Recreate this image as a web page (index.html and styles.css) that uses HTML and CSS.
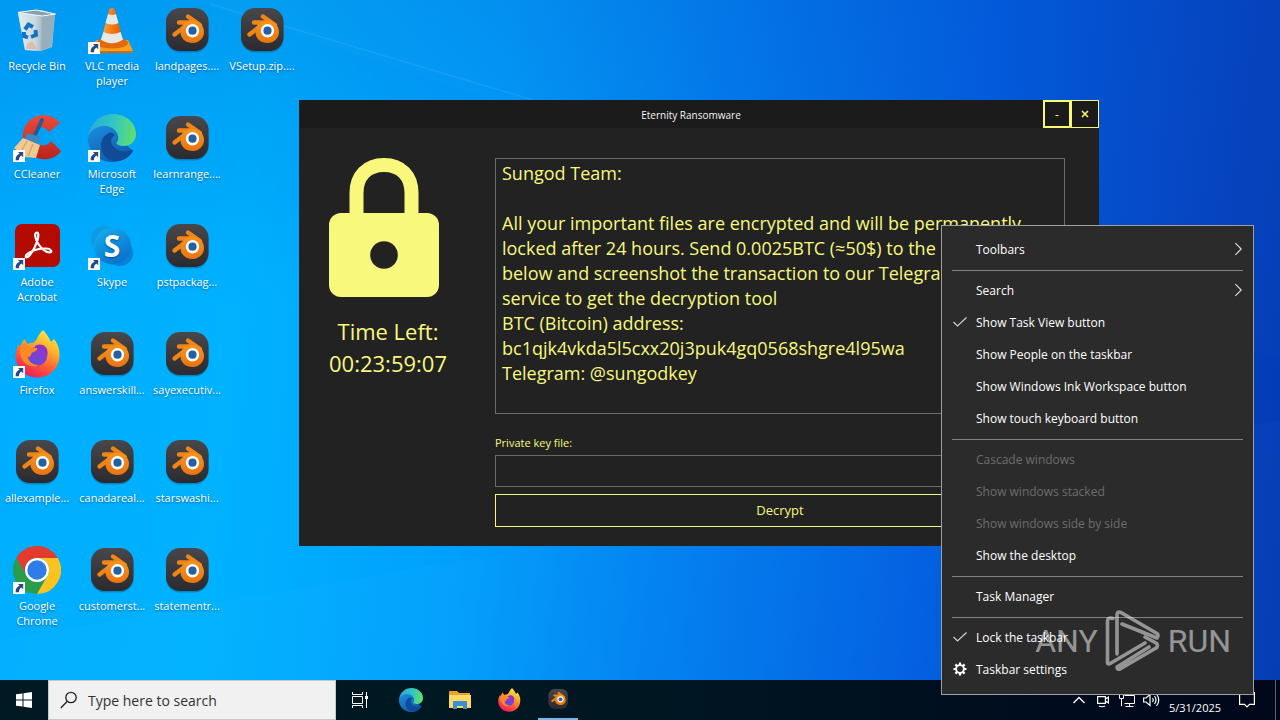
FILE: index.html
```html
<!DOCTYPE html>
<html lang="en">
<head>
<meta charset="utf-8">
<title>Desktop</title>
<link rel="stylesheet" href="styles.css">
</head>
<body>
<svg class="defs" aria-hidden="true">
  <defs>
    <linearGradient id="g-tile" x1="0" y1="0" x2="0" y2="1"><stop offset="0" stop-color="#48484c"/><stop offset="1" stop-color="#2b2b2f"/></linearGradient>
    <linearGradient id="g-body" x1="0" y1="0" x2="0" y2="1"><stop offset="0" stop-color="#f7941d"/><stop offset="1" stop-color="#ea7410"/></linearGradient>
    <linearGradient id="g-edge-top" x1="0" y1="0.4" x2="1" y2="0.5"><stop offset="0" stop-color="#27a9dd"/><stop offset="0.5" stop-color="#30c6c4"/><stop offset="1" stop-color="#63de6a"/></linearGradient>
    <linearGradient id="g-edge-left" x1="0" y1="0" x2="0.6" y2="1"><stop offset="0" stop-color="#1c8fe0"/><stop offset="1" stop-color="#0d5cae"/></linearGradient>
    <linearGradient id="g-fox" x1="0.8" y1="0" x2="0.3" y2="1"><stop offset="0" stop-color="#fff04a"/><stop offset="0.35" stop-color="#ffb02a"/><stop offset="0.65" stop-color="#ff5f35"/><stop offset="1" stop-color="#ec1860"/></linearGradient>
    <linearGradient id="g-fox-ball" x1="0.2" y1="1" x2="0.9" y2="0"><stop offset="0" stop-color="#5a50d8"/><stop offset="1" stop-color="#a02fd0"/></linearGradient>
    <linearGradient id="g-bin" x1="0" y1="0" x2="1" y2="0"><stop offset="0" stop-color="#e9eef2"/><stop offset="0.7" stop-color="#cfd8de"/><stop offset="1" stop-color="#a9b6bf"/></linearGradient>
    <linearGradient id="g-cone" x1="0" y1="0" x2="1" y2="0"><stop offset="0" stop-color="#ffa64a"/><stop offset="0.5" stop-color="#f67a10"/><stop offset="1" stop-color="#dd5a00"/></linearGradient>
    <linearGradient id="g-cc" x1="0" y1="0" x2="0" y2="1"><stop offset="0" stop-color="#ee4a38"/><stop offset="1" stop-color="#b9231c"/></linearGradient>
    <linearGradient id="g-skype" x1="0" y1="0" x2="0.6" y2="1"><stop offset="0" stop-color="#18b2f0"/><stop offset="1" stop-color="#0873cc"/></linearGradient>
  </defs>

  <symbol id="blender-mark" viewBox="0 0 48 48">
    <g stroke="#f08516" stroke-width="4.400" stroke-linecap="round" fill="none"><path d="M25 10.500 37 19M16 16.500H31M11.500 28.500 24 19"/></g>
    <path fill="url(#g-body)" d="M18 22C20 17 25 15 31 15 37 16 41 20 41 26 41 32 36 37 29.500 37 23 37 18 33 17.500 27Z"/>
    <circle cx="29.500" cy="24.700" r="6.700" fill="#fff"/><circle cx="29.500" cy="24.700" r="4.100" fill="#245f9f"/>
  </symbol>
  <symbol id="blender" viewBox="0 0 48 48">
    <rect x="3" y="3.500" width="42.500" height="43" rx="14" fill="#02385c" opacity="0.35"/>
    <rect x="3" y="2" width="42.500" height="43" rx="14" fill="url(#g-tile)"/>
    <use href="#blender-mark"/>
  </symbol>
  <symbol id="shortcut" viewBox="0 0 12 12">
    <path fill="#fff" d="M0 0H12V12H0Z"/>
    <path fill="#27478a" d="M5 2H10.200V7.200L8.400 5.500C6.500 6.600 6 8 6 10.200H2.700C2.300 7 3.800 4.600 6.600 3.700Z"/>
  </symbol>
  <symbol id="bin" viewBox="0 0 48 48">
    <path fill="#dfe9ef" opacity="0.75" d="M5 6 28 4 42 8 39 41 28 45 12 44Z"/>
    <path fill="url(#g-bin)" opacity="0.9" d="M5 7.500 29 9.500 28 45 12 44Z"/>
    <path fill="#93a4ae" opacity="0.8" d="M29 9.500 42 8 38.500 41 28 45Z"/>
    <path fill="#86a0ae" stroke="#f4f8fa" stroke-width="1" d="M5 6.500 23 4 42.500 8 29 10Z"/>
    <g fill="none" stroke="#1673c2" stroke-width="4"><path d="M12 23.500 15.500 18.500 20 21M22.500 24 23 29 18 31M15 31.500 11 30 11 26"/></g>
    <path fill="#e8a888" opacity="0.6" d="M14 38 19 35 24 43 13 43Z"/>
  </symbol>
  <symbol id="vlc" viewBox="0 0 48 48">
    <path fill="#f9a01f" d="M8 34H40L45 45Q45 47 43 47H5Q3 47 3 45Z"/>
    <path fill="#d86605" d="M3 45H45Q45 47 43 47H5Q3 47 3 45Z"/>
    <ellipse cx="24" cy="37" rx="16" ry="5.500" fill="#e06a0c"/>
    <path fill="url(#g-cone)" d="M21.500 3Q24 .5 26.500 3L35 34Q24 41 13 34Z"/>
    <path fill="#e6e8e8" d="M20 8Q24 10 28 8L30.500 17Q24 20 17.500 17ZM15.500 26Q24 30 32.500 26L35 33.500Q24 41 13 33.500Z"/>
  </symbol>
  <symbol id="ccleaner" viewBox="0 0 48 48">
    <path fill="url(#g-cc)" d="M47 9C39 -1 24-1 16 7 7 16 8 32 17 40 26 48 41 47 48 37L38 27C35 32 28 33 24 29 19 24 20 17 25 14 29 12 33 14 36 18Z"/>
    <path stroke="#245d91" stroke-width="4" stroke-linecap="round" d="M29 6 22 21"/>
    <path fill="#3c87bd" d="M14 19 28 23 25 31 11 27Z"/>
    <path fill="#f0c891" d="M10 24 27 31 23 44 12 43 1 34Z"/>
    <path stroke="#d5a063" stroke-width="1.200" fill="none" d="M14 27 8 38M20 30 15 42"/>
  </symbol>
  <symbol id="edge" viewBox="0 0 48 48">
    <path fill="url(#g-edge-left)" d="M0 25C0 17 8 11 16 11 25 11 32 17 31 24L45 37C41 44 33 48 24 48 10 48 0 37 0 25Z"/>
    <path fill="url(#g-edge-top)" d="M0 23C2 9 12 0 25 0 38 0 48 9 48 20 48 28 42 32 36 32 31 32 27 30 29 28 33 23 28 12 16 12 8 12 2 17 0 23Z"/>
    <path fill="#114b97" d="M21 19C15 22 13 27 13 32 13 41 20 48 30 47 37 46 42 42 45 37 45 36 44 35.500 43 36 37 39 29 37 26 33 22 29 22 24 27 21 25 19 23 18 21 19Z"/>
  </symbol>
  <symbol id="acrobat" viewBox="0 0 48 48">
    <rect x="2" y="2" width="45" height="43" rx="7" fill="#b30b00"/>
    <path fill="none" stroke="#fff" stroke-width="2.200" stroke-linejoin="round" d="M24 10.500C20.500 10.500 22.500 17 25 21.500 28 26.500 33 30.500 36.500 30.500 40 30 38 26.500 33 26.500 26 26.500 19 28.500 15 31.500 11 34.500 13 37 16 34 20 30 24 21 25 16 25.500 12.500 25.500 10.500 24 10.500Z"/>
  </symbol>
  <symbol id="skype" viewBox="0 0 48 48">
    <circle cx="16" cy="17" r="13" fill="#0c9be4"/><circle cx="32" cy="31" r="13" fill="#0a82d4"/>
    <circle cx="24.500" cy="24" r="18.500" fill="url(#g-skype)"/>
    <text x="24" y="35" class="skype-letter">S</text>
  </symbol>
  <symbol id="firefox" viewBox="0 0 48 48">
    <path fill="url(#g-fox)" d="M30 0C34 4 36 8 38 12L41 9C45 14 47 20 46.500 26 46 39 36 47.500 24.500 47.500 12 47.500 2.500 38 2.500 26 2.500 21 4 17 6 14L7 18C8 14 9 11 12 9L14 14 18 13C24 13 24 5 30 0Z"/>
    <circle cx="24.500" cy="26" r="9.500" fill="url(#g-fox-ball)"/>
    <path fill="#ff8a24" d="M7 15 16 17.500 24 18C25 21 20 22 18.500 23 18 27 16 27 14 27 16 32 20 35 25 35 22 38 12 36 9 29 7 25 6 20 7 15Z"/>
    <path fill="#8e33c9" d="M22 16C29 12 37 17 34 27L32 22C31 20 27 18 22 18Z"/>
  </symbol>
  <symbol id="chrome" viewBox="0 0 48 48">
    <path fill="#e33b2e" d="M24 12H44.800A24 24 0 0 0 3.200 12L13.600 30A12 12 0 0 1 24 12Z"/>
    <path fill="#2a9d4a" d="M3.200 12A24 24 0 0 0 24 48L34.400 30A12 12 0 0 1 13.600 30Z"/>
    <path fill="#fcc31e" d="M44.800 12A24 24 0 0 1 24 48L34.400 30A12 12 0 0 0 24 12Z"/>
    <circle cx="24" cy="24" r="12" fill="#fff"/><circle cx="24" cy="24" r="9.700" fill="#2f7bea"/>
  </symbol>
  <symbol id="chevron" viewBox="0 0 10 16"><path fill="none" stroke="#d8d8d8" stroke-width="1.300" d="M1.500 1.500 8 8 1.500 14.500"/></symbol>
  <symbol id="check" viewBox="0 0 14 10"><path fill="none" stroke="#d0d0d0" stroke-width="1.200" d="M.5 5 4.500 9 13.500 .5"/></symbol>
</svg>

<main class="desktop">
  <svg class="beams" viewBox="0 0 1280 680" preserveAspectRatio="none" aria-hidden="true">
    <path fill="#fff" opacity="0.012" d="M190 0 1280 360 1280 0Z"/>
    <path stroke="#8fd6ff" stroke-width="1.500" opacity="0.12" d="M210 4 560 108"/>
    <path fill="#fff" opacity="0.015" d="M0 640 1280 420V680H0Z"/>
  </svg>

  <div class="icons">
    <button class="icon" type="button"><svg class="pic"><use href="#bin"/></svg><span>Recycle Bin</span></button>
    <button class="icon" type="button"><svg class="pic"><use href="#ccleaner"/><use href="#shortcut" y="36" width="12" height="12"/></svg><span>CCleaner</span></button>
    <button class="icon" type="button"><svg class="pic"><use href="#acrobat"/><use href="#shortcut" y="36" width="12" height="12"/></svg><span>Adobe<br>Acrobat</span></button>
    <button class="icon" type="button"><svg class="pic"><use href="#firefox"/><use href="#shortcut" y="36" width="12" height="12"/></svg><span>Firefox</span></button>
    <button class="icon" type="button"><svg class="pic"><use href="#blender"/></svg><span>allexample...</span></button>
    <button class="icon" type="button"><svg class="pic"><use href="#chrome"/><use href="#shortcut" y="36" width="12" height="12"/></svg><span>Google<br>Chrome</span></button>

    <button class="icon" type="button"><svg class="pic"><use href="#vlc"/><use href="#shortcut" y="36" width="12" height="12"/></svg><span>VLC media<br>player</span></button>
    <button class="icon" type="button"><svg class="pic"><use href="#edge"/><use href="#shortcut" y="36" width="12" height="12"/></svg><span>Microsoft<br>Edge</span></button>
    <button class="icon" type="button"><svg class="pic"><use href="#skype"/><use href="#shortcut" y="36" width="12" height="12"/></svg><span>Skype</span></button>
    <button class="icon" type="button"><svg class="pic"><use href="#blender"/></svg><span>answerskill...</span></button>
    <button class="icon" type="button"><svg class="pic"><use href="#blender"/></svg><span>canadareal...</span></button>
    <button class="icon" type="button"><svg class="pic"><use href="#blender"/></svg><span>customerst...</span></button>

    <button class="icon" type="button"><svg class="pic"><use href="#blender"/></svg><span>landpages....</span></button>
    <button class="icon" type="button"><svg class="pic"><use href="#blender"/></svg><span>learnrange....</span></button>
    <button class="icon" type="button"><svg class="pic"><use href="#blender"/></svg><span>pstpackag...</span></button>
    <button class="icon" type="button"><svg class="pic"><use href="#blender"/></svg><span>sayexecutiv...</span></button>
    <button class="icon" type="button"><svg class="pic"><use href="#blender"/></svg><span>starswashi...</span></button>
    <button class="icon" type="button"><svg class="pic"><use href="#blender"/></svg><span>statementr...</span></button>

    <button class="icon" type="button"><svg class="pic"><use href="#blender"/></svg><span>VSetup.zip....</span></button>
  </div>

  <section class="window">
    <header class="titlebar">
      <h1 class="title">Eternity Ransomware</h1>
      <button class="win-btn focused" type="button">-</button>
      <button class="win-btn" type="button" aria-label="Close"><svg width="8" height="8" viewBox="0 0 8 8"><path stroke="#f9f871" stroke-width="1.600" d="M1 1 7 7M7 1 1 7"/></svg></button>
    </header>
    <div class="content">
      <div class="status">
        <svg class="lock" viewBox="0 0 110 139"><path fill="none" stroke="#f8f87c" stroke-width="14" d="M27.500 57V35C27.500 18 38 7 55 7S82.500 18 82.500 35V57"/><rect y="55" width="110" height="84" rx="12" fill="#f8f87c"/><circle cx="55" cy="97" r="13.800" fill="#222"/></svg>
        <p class="timer">Time Left:<br>00:23:59:07</p>
      </div>
      <form class="form">
        <textarea class="note" readonly aria-label="Message">Sungod Team:

All your important files are encrypted and will be permanently
locked after 24 hours. Send 0.0025BTC (≈50$) to the address
below and screenshot the transaction to our Telegram
service to get the decryption tool
BTC (Bitcoin) address:
bc1qjk4vkda5l5cxx20j3puk4gq0568shgre4l95wa
Telegram: @sungodkey</textarea>
        <label class="key-label" for="key">Private key file:</label>
        <input class="key" id="key" type="text">
        <button class="decrypt" type="button">Decrypt</button>
      </form>
    </div>
  </section>
</main>

<footer class="taskbar">
  <button class="start" type="button" aria-label="Start"><svg width="16" height="16" viewBox="0 0 16 16"><path fill="#fff" d="M0 2.300 6.500 1.400V7.500H0ZM7.500 1.200 16 0V7.500H7.500ZM0 8.500H6.500V14.600L0 13.700ZM7.500 8.500H16V16L7.500 14.800Z"/></svg></button>
  <div class="search">
    <svg width="18" height="18" viewBox="0 0 18 18"><g fill="none" stroke="#222" stroke-width="1.300"><circle cx="11" cy="6.500" r="5.200"/><path d="M7.300 10.300.8 17"/></g></svg>
    <input class="search-input" type="text" placeholder="Type here to search" aria-label="Search">
  </div>
  <nav class="apps">
    <button class="app view" type="button" aria-label="Task View"><svg width="18" height="18" viewBox="0 0 18 18"><path fill="none" stroke="#fff" d="M1.500 1V3.500H11.500V1M1.500 17V14.500H11.500V17M1.500 5.500H11.500V12.500H1.500ZM15.500 1V17"/><path fill="#fff" d="M14 5H17V8H14Z"/></svg></button>
    <button class="app" type="button" aria-label="Edge"><svg width="24" height="24"><use href="#edge"/></svg></button>
    <button class="app" type="button" aria-label="Explorer"><svg width="22" height="20" viewBox="0 0 22 20"><path fill="#e9a325" d="M0 2Q0 1 1 1H8L10 3H21V8H0Z"/><path fill="#ffd968" d="M0 5H22V18H0Z"/><path fill="#3a91d0" d="M4 12Q4 11 5 11H17Q18 11 18 12V19H14V16H8V19H4Z"/></svg></button>
    <button class="app" type="button" aria-label="Firefox"><svg width="24" height="24"><use href="#firefox"/></svg></button>
    <button class="app active" type="button" aria-label="Blender"><svg width="22" height="22"><use href="#blender"/></svg></button>
  </nav>
  <div class="tray">
    <button class="tray-btn" type="button" aria-label="Hidden icons"><svg width="12" height="8" viewBox="0 0 12 8"><path fill="none" stroke="#fff" stroke-width="1.300" d="M.5 7 6 1.500 11.500 7"/></svg></button>
    <button class="tray-btn" type="button" aria-label="Meet Now"><svg width="12" height="16" viewBox="0 0 12 16"><path fill="none" stroke="#fff" stroke-width="1.200" d="M.6 4.600H8.400V11.400H.6ZM8.400 7 11.400 5V11L8.400 9M2 14Q5 15.500 8 14"/></svg></button>
    <button class="tray-btn" type="button" aria-label="Network"><svg width="16" height="16" viewBox="0 0 16 16"><path fill="none" stroke="#fff" d="M5.500 3.500H15.500V11.500H5.500M10.500 11.500V14.500M6.500 14.500H14.500M.5 2.500H4.500V6.500H.5ZM2.500 6.500V14"/></svg></button>
    <button class="tray-btn" type="button" aria-label="Volume"><svg width="17" height="16" viewBox="0 0 17 16"><path fill="none" stroke="#fff" stroke-width="1.200" d="M.6 6H3L7 2.500V13.500L3 10H.6ZM9.500 6Q11 8 9.500 10M11.500 4Q14.500 8 11.500 12M13.500 2Q18 8 13.500 14"/></svg></button>
    <time class="clock">5/31/2025</time>
    <button class="notice" type="button" aria-label="Notifications"><svg width="16" height="18" viewBox="0 0 16 18"><path fill="none" stroke="#fff" stroke-width="1.200" d="M.6 1.600H15.400V13.400H10.500L8 16 5.500 13.400H.6Z"/></svg></button>
    <button class="peek" type="button" aria-label="Show desktop"></button>
  </div>
</footer>

<div class="menu" role="menu">
  <button class="item" role="menuitem"><span></span>Toolbars<svg class="more"><use href="#chevron"/></svg></button>
  <hr class="sep">
  <button class="item" role="menuitem"><span></span>Search<svg class="more"><use href="#chevron"/></svg></button>
  <button class="item" role="menuitem"><svg class="tick"><use href="#check"/></svg>Show Task View button</button>
  <button class="item" role="menuitem"><span></span>Show People on the taskbar</button>
  <button class="item" role="menuitem"><span></span>Show Windows Ink Workspace button</button>
  <button class="item" role="menuitem"><span></span>Show touch keyboard button</button>
  <hr class="sep">
  <button class="item" role="menuitem" disabled><span></span>Cascade windows</button>
  <button class="item" role="menuitem" disabled><span></span>Show windows stacked</button>
  <button class="item" role="menuitem" disabled><span></span>Show windows side by side</button>
  <button class="item" role="menuitem"><span></span>Show the desktop</button>
  <hr class="sep">
  <button class="item" role="menuitem"><span></span>Task Manager</button>
  <hr class="sep">
  <button class="item" role="menuitem"><svg class="tick"><use href="#check"/></svg>Lock the taskbar</button>
  <button class="item" role="menuitem"><svg class="gear" viewBox="0 0 14 14"><circle cx="7" cy="7" r="3.900" fill="none" stroke="#fff" stroke-width="1.900"/><path stroke="#fff" stroke-width="2.200" d="M7 .5V3M7 11V13.500M.5 7H3M11 7H13.500M2.400 2.400 4.100 4.100M9.900 9.900 11.600 11.600M2.400 11.600 4.100 9.900M9.900 4.100 11.600 2.400"/></svg>Taskbar settings</button>
</div>

<div class="watermark">
  <span>ANY</span>
  <svg width="56" height="62" viewBox="0 0 56 62" aria-hidden="true"><g fill="none" stroke="#fff" stroke-width="3.600" stroke-linejoin="round" stroke-linecap="round"><path d="M8 8.500 Q2.500 7 2.500 11V53Q3 55 6 53L40 33"/><path d="M12 44V5Q12 1 16 2.500L52 23.500Q54 25 52 28L17 14"/><path d="M40 27 51 33Q54 35.500 51 38L15 59Q12 60 12 57L44 37"/></g></svg>
  <span>RUN</span>
</div>
</body>
</html>
```
FILE: styles.css
```css
* {
  box-sizing: border-box;
}

body {
  position: relative;
  display: flex;
  flex-direction: column;
  min-height: 100vh;
  margin: 0;
  overflow: hidden;
  font-family: "Open Sans", "Noto Sans", sans-serif;
  font-size: 12px;
}

button,
input,
textarea {
  margin: 0;
  padding: 0;
  border: 0;
  border-radius: 0;
  background: none;
  color: inherit;
  font: inherit;
}

button {
  display: flex;
  align-items: center;
  justify-content: center;
}

.defs {
  position: absolute;
  width: 0;
  height: 0;
}

.desktop {
  position: relative;
  flex: 1;
  background:
    linear-gradient(180deg, rgba(0, 70, 190, 0.2), rgba(0, 180, 255, 0) 45%),
    linear-gradient(96deg, #00adff 0%, #00b2ff 20%, #00a0fc 38%, #007cee 56%, #005de0 74%, #0446c6 88%, #033ab2 100%);
}

.beams {
  position: absolute;
  inset: 0;
  width: 100%;
  height: 100%;
}

.icons {
  position: relative;
  display: grid;
  grid-auto-flow: column;
  grid-template-rows: repeat(6, 108px);
  grid-auto-columns: 74px;
  column-gap: 1px;
}

.icon {
  flex-direction: column;
  justify-content: flex-start;
  gap: 4px;
  padding-top: 6px;
  color: #fff;
  font-size: 11px;
  line-height: 15px;
  text-shadow: 0 1px 2px rgba(0, 40, 90, 0.6);
  white-space: nowrap;
}

.pic {
  width: 48px;
  height: 48px;
}

.skype-letter {
  fill: #fff;
  font: 700 30px "Open Sans", sans-serif;
  text-anchor: middle;
}

.window {
  position: absolute;
  top: 100px;
  left: 299px;
  width: 800px;
  padding-bottom: 19px;
  background: #222;
  color: #f8f87c;
}

.titlebar {
  display: flex;
  height: 28px;
  padding-left: 40px;
  background: #1b1b1b;
}

.title {
  flex: 1;
  margin: 0;
  color: #f4f4f4;
  font-size: 10px;
  font-weight: 400;
  line-height: 31px;
  text-align: center;
}

.win-btn {
  width: 28px;
  border: 1px solid #f9f871;
}

.win-btn.focused {
  border-width: 2px;
}

.content {
  display: grid;
  grid-template-columns: 118px 1fr;
  column-gap: 48px;
  padding: 30px 34px 0 30px;
}

.lock {
  display: block;
  width: 110px;
  height: 139px;
}

.timer {
  margin: 18px 0 0;
  font-size: 22px;
  line-height: 32px;
  text-align: center;
  white-space: nowrap;
}

.form {
  display: flex;
  flex-direction: column;
}

.note {
  display: block;
  height: 256px;
  padding: 2px 6px;
  border: 1px solid #6a6a6a;
  font-size: 18px;
  line-height: 25px;
  resize: none;
  overflow: hidden;
  white-space: pre;
}

.key-label {
  margin: 19px 0 2px;
  font-size: 11px;
  line-height: 20px;
}

.key {
  height: 32px;
  border: 1px solid #6a6a6a;
}

.decrypt {
  height: 33px;
  margin-top: 7px;
  padding-bottom: 2px;
  border: 1px solid #f8f87c;
  font-size: 13px;
}

.taskbar {
  display: flex;
  height: 40px;
  background: linear-gradient(90deg, #001923, #001722 50%, #000b1d 85%, #00081a);
  color: #fff;
}

.start {
  width: 48px;
}

.search {
  display: flex;
  align-items: center;
  gap: 10px;
  width: 288px;
  padding: 0 11px;
  border: 1px solid #c8c8c8;
  background: #f1f1f1;
}

.search-input {
  flex: 1;
  min-width: 0;
  color: #222;
  font-size: 14px;
}

.search-input::placeholder {
  color: #333;
  opacity: 1;
}

.apps {
  display: flex;
  gap: 1px;
}

.app {
  width: 48px;
}

.app.view {
  margin-right: 2px;
}

.app.active {
  width: 40px;
  margin-left: 4px;
  border-bottom: 2px solid #76b9ed;
}

.tray {
  display: flex;
  margin-left: auto;
}

.tray-btn {
  width: 24px;
}

.clock {
  width: 64px;
  padding-top: 18px;
  font-size: 11px;
  line-height: 20px;
  text-align: center;
}

.notice {
  width: 48px;
  padding-right: 8px;
}

.peek {
  width: 5px;
  border-left: 1px solid #59616e;
}

.menu {
  position: absolute;
  right: 26px;
  bottom: 25px;
  width: 313px;
  padding: 8px 0;
  border: 1px solid #a0a0a0;
  background: #2b2b2b;
  color: #fff;
}

.item {
  display: grid;
  grid-template-columns: 14px 1fr auto;
  column-gap: 9px;
  width: 100%;
  height: 32px;
  padding: 0 10px 2px 11px;
  text-align: left;
}

.item:disabled {
  color: #6d6d6d;
}

.more {
  width: 9px;
  height: 16px;
}

.tick {
  width: 14px;
  height: 10px;
}

.gear {
  width: 14px;
  height: 14px;
}

.sep {
  height: 1px;
  margin: 4px 10px;
  border: 0;
  background: #808080;
}

.watermark {
  position: absolute;
  right: 49px;
  bottom: 48px;
  display: flex;
  align-items: center;
  gap: 7px;
  color: #fff;
  font-family: "Liberation Sans Narrow", "Roboto", sans-serif;
  font-size: 32px;
  line-height: 62px;
  opacity: 0.5;
  pointer-events: none;
}
```
